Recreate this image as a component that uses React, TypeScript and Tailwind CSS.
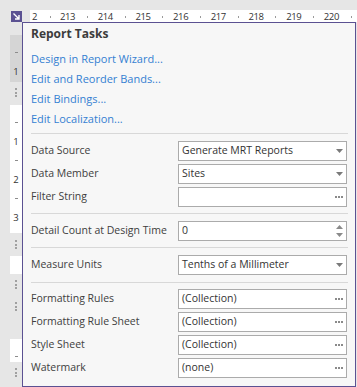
import React from 'react';

const rulerNums = [213, 214, 215, 216, 217, 218, 219, 220];

const Grip = () => (
  <div className="flex flex-col items-center gap-[1.5px]">
    <div className="w-[2px] h-[2px] bg-[#a0a0a0]" />
    <div className="w-[2px] h-[2px] bg-[#a0a0a0]" />
    <div className="w-[2px] h-[2px] bg-[#a0a0a0]" />
  </div>
);

const Tick = () => <div className="w-[3px] h-px bg-[#8c8c8c]" />;

const Num = ({ n }: { n: string }) => (
  <span className="text-[9.5px] leading-[11px] text-[#333]">{n}</span>
);

const RulerDot = () => <div className="w-px h-[2px] bg-[#9a9a9a] mt-[1px]" />;

const DropArrow = () => (
  <svg width="7" height="4" viewBox="0 0 7 4">
    <path d="M0 0 H7 L3.5 4 Z" fill="#7a7a7a" />
  </svg>
);

const Dots = () => (
  <svg width="8" height="2" viewBox="0 0 8 2">
    <rect x="0" y="0" width="2" height="2" fill="#8a8a8a" />
    <rect x="3" y="0" width="2" height="2" fill="#8a8a8a" />
    <rect x="6" y="0" width="2" height="2" fill="#8a8a8a" />
  </svg>
);

const Spin = () => (
  <svg width="7" height="12" viewBox="0 0 7 12">
    <path d="M0 4 H7 L3.5 0 Z" fill="#8a8a8a" />
    <path d="M0 8 H7 L3.5 12 Z" fill="#8a8a8a" />
  </svg>
);

type Kind = 'drop' | 'dots' | 'spin';

function Field({ label, value, kind }: { label: string; value: string; kind: Kind }) {
  return (
    <div className="flex items-center h-[20px]">
      <div className="w-[147px] text-[#404040] whitespace-nowrap">{label}</div>
      <div className="w-[169px] h-[20px] border border-[#ababab] bg-white flex items-center pl-[3px] pr-[3px]">
        <span className="flex-1 text-[#333] whitespace-nowrap">{value}</span>
        {kind === 'drop' && <DropArrow />}
        {kind === 'dots' && <Dots />}
        {kind === 'spin' && <Spin />}
      </div>
    </div>
  );
}

const Sep = ({ cls }: { cls: string }) => <div className={`h-px bg-[#d8d8d8] ${cls}`} />;

export default function App() {
  return (
    <div className="w-[357px] h-[387px] bg-[#e6e6e6] overflow-hidden font-['Open_Sans',sans-serif] text-[10.5px]">
      {/* top strip with smart tag glyph and horizontal ruler */}
      <div className="flex h-[22px]">
        <div className="w-[22px] pl-[11px] pt-[11px]">
          <div className="w-[11px] h-[11px] bg-[#5b5192] flex items-center justify-center">
            <svg width="9" height="9" viewBox="0 0 9 9">
              <path d="M1.5 1.5 L6.5 6.5 M7 3 V7 H3" stroke="#fff" strokeWidth="1.4" fill="none" />
            </svg>
          </div>
        </div>
        <div className="w-[8px]" />
        <div className="flex-1 mt-[10px] h-[12px] bg-white overflow-hidden">
          <div className="flex h-[12px] pl-[2px] pt-[1px] text-[9.5px] leading-[11px] tracking-[-0.4px]">
            <div className="w-[28px] h-[11px] shrink-0 flex items-center">
              <div className="w-[18px] h-[11px] shrink-0"><Num n="2" /></div>
              <RulerDot />
            </div>
            {rulerNums.map((n) => (
              <div key={n} className="w-[37.7px] h-[11px] shrink-0 flex items-center">
                <div className="w-[27px] h-[11px] shrink-0">
                  <Num n={String(n)} />
                </div>
                <RulerDot />
              </div>
            ))}
          </div>
        </div>
      </div>

      <div className="flex">
        {/* vertical ruler */}
        <div className="w-[10px]" />
        <div className="w-[12px] h-[365px] flex flex-col">
          <div className="h-[13px]" />
          <div className="h-[47px] bg-[#d5d5d5] flex flex-col pt-[8px]">
            <div className="h-[19px] flex items-center justify-center"><Tick /></div>
            <div className="h-[19px] flex items-center justify-center"><Num n="1" /></div>
          </div>
          <div className="h-[23px] flex justify-center pt-[6px]"><Grip /></div>
          <div className="h-[128px] bg-white flex flex-col pt-[8px]">
            <div className="h-[19px] flex items-center justify-center"><Tick /></div>
            <div className="h-[19px] flex items-center justify-center"><Num n="1" /></div>
            <div className="h-[19px] flex items-center justify-center"><Tick /></div>
            <div className="h-[19px] flex items-center justify-center"><Num n="2" /></div>
            <div className="h-[19px] flex items-center justify-center"><Tick /></div>
            <div className="h-[19px] flex items-center justify-center"><Num n="3" /></div>
          </div>
          <div className="h-[23px] flex justify-center pt-[7px]"><Grip /></div>
          <div className="h-[18px] bg-white" />
          <div className="h-[65px] flex flex-col items-center pt-[6px] gap-[13px]">
            <Grip />
            <Grip />
          </div>
          <div className="h-[23px] bg-white flex flex-col items-center pt-[17px]"><Tick /></div>
          <div className="h-[25px] flex justify-center pt-[6px]"><Grip /></div>
        </div>

        {/* smart tag panel */}
        <div className="w-[334px] h-[365px] border border-[#5b5192] bg-[#f7f7f7] flex flex-col pl-[8px] pr-[7px]">
          <div className="mt-[3px] h-[16px] leading-[16px] text-[12px] font-bold text-[#3c3c3c]">Report Tasks</div>
          <div className="mt-[7px] flex flex-col text-[11px] text-[#3480d2]">
            <div className="h-[20px] leading-[20px]">Design in Report Wizard...</div>
            <div className="h-[20px] leading-[20px]">Edit and Reorder Bands...</div>
            <div className="h-[20px] leading-[20px]">Edit Bindings...</div>
            <div className="h-[20px] leading-[20px]">Edit Localization...</div>
          </div>
          <Sep cls="mt-[4px]" />
          <div className="mt-[7px] flex flex-col gap-[3px]">
            <Field label="Data Source" value="Generate MRT Reports" kind="drop" />
            <Field label="Data Member" value="Sites" kind="drop" />
            <Field label="Filter String" value="" kind="dots" />
          </div>
          <Sep cls="mt-[6px]" />
          <div className="mt-[7px]">
            <Field label="Detail Count at Design Time" value="0" kind="spin" />
          </div>
          <Sep cls="mt-[6px]" />
          <div className="mt-[7px]">
            <Field label="Measure Units" value="Tenths of a Millimeter" kind="drop" />
          </div>
          <Sep cls="mt-[7px]" />
          <div className="mt-[6px] flex flex-col gap-[3px]">
            <Field label="Formatting Rules" value="(Collection)" kind="dots" />
            <Field label="Formatting Rule Sheet" value="(Collection)" kind="dots" />
            <Field label="Style Sheet" value="(Collection)" kind="dots" />
            <Field label="Watermark" value="(none)" kind="dots" />
          </div>
        </div>
      </div>
    </div>
  );
}
